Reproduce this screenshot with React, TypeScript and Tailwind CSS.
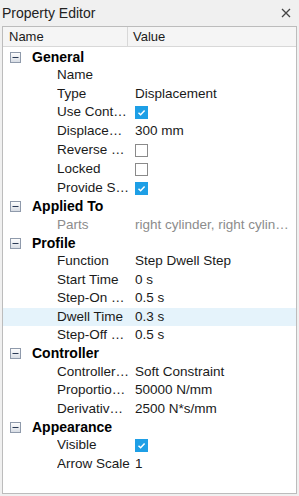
import React from "react";

type Row =
  | { kind: "group"; label: string }
  | { kind: "prop"; label: string; value?: string; check?: boolean; disabled?: boolean; hl?: boolean };

const rows: Row[] = [
  { kind: "group", label: "General" },
  { kind: "prop", label: "Name", value: "" },
  { kind: "prop", label: "Type", value: "Displacement" },
  { kind: "prop", label: "Use Controller", check: true },
  { kind: "prop", label: "Displacement", value: "300 mm" },
  { kind: "prop", label: "Reverse Direction", check: false },
  { kind: "prop", label: "Locked", check: false },
  { kind: "prop", label: "Provide Simulation", check: true },
  { kind: "group", label: "Applied To" },
  { kind: "prop", label: "Parts", value: "right cylinder, right cylinder, right cylinder", disabled: true },
  { kind: "group", label: "Profile" },
  { kind: "prop", label: "Function", value: "Step Dwell Step" },
  { kind: "prop", label: "Start Time", value: "0 s" },
  { kind: "prop", label: "Step-On Duration", value: "0.5 s" },
  { kind: "prop", label: "Dwell Time", value: "0.3 s", hl: true },
  { kind: "prop", label: "Step-Off Duration", value: "0.5 s" },
  { kind: "group", label: "Controller" },
  { kind: "prop", label: "Controller Type", value: "Soft Constraint" },
  { kind: "prop", label: "Proportional Gain", value: "50000 N/mm" },
  { kind: "prop", label: "Derivative Gain", value: "2500 N*s/mm" },
  { kind: "group", label: "Appearance" },
  { kind: "prop", label: "Visible", check: true },
  { kind: "prop", label: "Arrow Scale", value: "1" },
];

function MinusBox() {
  return (
    <svg width="11" height="11" viewBox="0 0 11 11">
      <defs>
        <linearGradient id="mb" x1="0" y1="0" x2="0" y2="1">
          <stop offset="0" stopColor="#ffffff" />
          <stop offset="1" stopColor="#d6dbe3" />
        </linearGradient>
      </defs>
      <rect x="0.5" y="0.5" width="10" height="10" fill="url(#mb)" stroke="#8f9aab" />
      <rect x="2.5" y="5" width="6" height="1" fill="#2b3a55" />
    </svg>
  );
}

function Check({ on }: { on: boolean }) {
  if (!on)
    return <div className="w-[13px] h-[13px] border border-[#8a8a8a] bg-white" />;
  return (
    <div className="w-[13px] h-[13px] bg-[#1e9fe6] flex items-center justify-center">
      <svg width="9" height="9" viewBox="0 0 9 9">
        <path d="M1.5 4.7 L3.6 6.7 L7.6 2.4" fill="none" stroke="white" strokeWidth="1.5" />
      </svg>
    </div>
  );
}

export default function App() {
  return (
    <div
      className="w-[299px] h-[496px] bg-[#f0f0f0] flex flex-col text-[13.5px] text-[#1a1a1a]"
      style={{ fontFamily: '"Liberation Sans", Arial, sans-serif' }}
    >
      <div className="h-[26px] flex items-center justify-between pl-[2px] pr-[8px] shrink-0">
        <span className="text-[14px] text-[#222] leading-none">Property Editor</span>
        <svg width="10" height="10" viewBox="0 0 10 10">
          <path d="M1 1 L9 9 M9 1 L1 9" stroke="#444" strokeWidth="1.3" />
        </svg>
      </div>
      <div className="mx-[2px] mb-[2px] flex-1 border border-[#bcbcbc] bg-white flex flex-col overflow-hidden">
        <div className="h-[20px] flex bg-[#f5f5f5] border-b border-[#d8d8d8] shrink-0 text-[13px]">
          <div className="w-[125px] border-r border-[#d8d8d8] pl-[6px] flex items-center">Name</div>
          <div className="pl-[5px] flex items-center">Value</div>
        </div>
        <div className="flex flex-col pt-[1px]">
          {rows.map((r, i) =>
            r.kind === "group" ? (
              <div key={i} className="h-[18px] flex items-center">
                <div className="w-[29px] pl-[7px] flex items-center">
                  <MinusBox />
                </div>
                <span className="font-bold text-[14px] text-black">{r.label}</span>
              </div>
            ) : (
              <div
                key={i}
                className={`flex items-center ${r.check !== undefined ? "h-[19px]" : "h-[18.5px]"} ${r.hl ? "bg-[#e5f3fb]" : ""}`}
              >
                <div
                  className={`w-[73px] shrink-0 ml-[54px] truncate ${r.disabled ? "text-[#8c8c8c]" : ""}`}
                >
                  {r.label}
                </div>
                <div className={`flex-1 min-w-0 pl-[5px] pr-[2px] truncate ${r.disabled ? "text-[#8c8c8c]" : ""}`}>
                  {r.check !== undefined ? <Check on={r.check} /> : r.value}
                </div>
              </div>
            )
          )}
        </div>
      </div>
    </div>
  );
}
